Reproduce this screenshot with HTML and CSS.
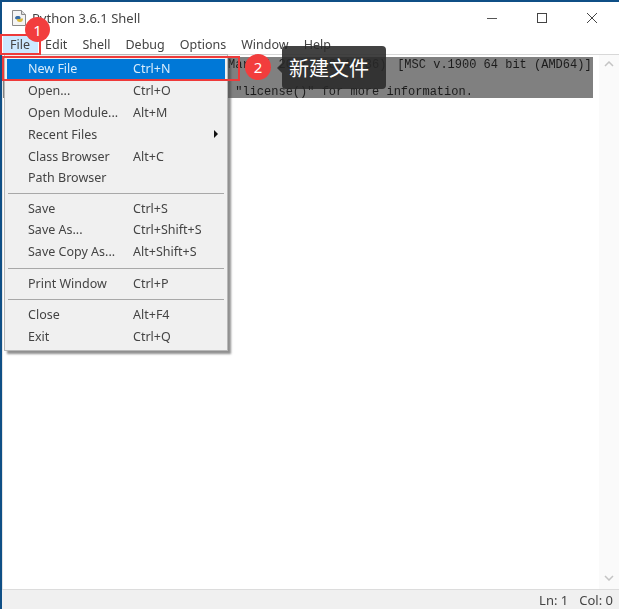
FILE: index.html
```html
<!DOCTYPE html>
<html lang="en">
<head>
  <meta charset="UTF-8">
  <title>Python 3.6.1 Shell</title>
  <link rel="stylesheet" href="styles.css">
</head>
<body>
  <div class="window">
    <div class="titlebar">
      <svg class="app-icon" width="18" height="18" viewBox="0 0 18 18">
        <path d="M2.5 1.5h9l4 4v11h-13z" fill="#f4f4f4" stroke="#8a8a8a"/>
        <path d="M11.5 1.5v4h4" fill="#ddd" stroke="#8a8a8a"/>
        <path d="M5 9.5c0-2 1.200-2.500 3-2.500s2.500.7 2.500 1.500v2H7.500v.5" fill="#3a6ea5"/>
        <path d="M13 9.500c0 2.500-1 3.500-3 3.500s-3-.7-3-2v-1h3.500v-.5z" fill="#d9b93a"/>
      </svg>
      <span class="title">Python 3.6.1 Shell</span>
      <div class="controls">
        <svg width="12" height="12" viewBox="0 0 12 12"><path d="M1 6.500h10" stroke="#555" fill="none"/></svg>
        <svg width="12" height="12" viewBox="0 0 12 12"><rect x="1.500" y="1.500" width="9" height="9" stroke="#444" fill="none"/></svg>
        <svg width="12" height="12" viewBox="0 0 12 12"><path d="M1 1l10 10M11 1L1 11" stroke="#444" fill="none"/></svg>
      </div>
    </div>

    <div class="menubar">
      <span class="menu-top active">File</span>
      <span class="menu-top">Edit</span>
      <span class="menu-top">Shell</span>
      <span class="menu-top">Debug</span>
      <span class="menu-top">Options</span>
      <span class="menu-top">Window</span>
      <span class="menu-top">Help</span>
    </div>

    <div class="shell">
      <div class="shell-text">
        <div class="selection">
          <div>Python 3.6.1 (v3.6.1:69c0db5, Mar 21 2017, 18:41:36) <span class="build">[MSC v.1900 64 bit (AMD64)]</span></div>
          <div>Type "copyright", "credits" or "license()" for more information.</div>
        </div>
      </div>
      <div class="scrollbar">
        <svg width="10" height="6" viewBox="0 0 10 6"><path d="M1 5l4-4 4 4" stroke="#c4c4c4" stroke-width="1.500" fill="none"/></svg>
        <svg width="10" height="6" viewBox="0 0 10 6"><path d="M1 1l4 4 4-4" stroke="#c4c4c4" stroke-width="1.500" fill="none"/></svg>
      </div>
    </div>

    <div class="statusbar">
      <span>Ln: 1</span>
      <span>Col: 0</span>
    </div>

    <div class="menu">
      <div class="item selected"><span class="label">New File</span><span>Ctrl+N</span></div>
      <div class="item"><span class="label">Open...</span><span>Ctrl+O</span></div>
      <div class="item"><span class="label">Open Module...</span><span>Alt+M</span></div>
      <div class="item"><span class="label">Recent Files</span><i class="arrow"></i></div>
      <div class="item"><span class="label">Class Browser</span><span>Alt+C</span></div>
      <div class="item"><span class="label">Path Browser</span></div>
      <div class="sep sep-first"></div>
      <div class="item"><span class="label">Save</span><span>Ctrl+S</span></div>
      <div class="item"><span class="label">Save As...</span><span>Ctrl+Shift+S</span></div>
      <div class="item"><span class="label">Save Copy As...</span><span>Alt+Shift+S</span></div>
      <div class="sep"></div>
      <div class="item"><span class="label">Print Window</span><span>Ctrl+P</span></div>
      <div class="sep"></div>
      <div class="item"><span class="label">Close</span><span>Alt+F4</span></div>
      <div class="item"><span class="label">Exit</span><span>Ctrl+Q</span></div>
    </div>
  </div>

  <!-- annotations on top of the screenshot -->
  <div class="mark mark-file"></div>
  <div class="mark mark-new"></div>
  <div class="badge badge-1">1</div>
  <div class="badge badge-2">2</div>
  <div class="tip">新建文件</div>
</body>
</html>
```

FILE: styles.css
```css
* {
  box-sizing: border-box;
  margin: 0;
  padding: 0;
}

html, body {
  height: 609px;
  overflow: hidden;
}

body {
  background: #0f4f86;
  font-family: "Noto Sans", "Open Sans", "Liberation Sans", sans-serif;
  position: relative;
}

/* the filter makes this the containing block of .menu */
.window {
  height: 607px;
  margin: 2px 0 0 2px;
  background: #fff;
  display: flex;
  flex-direction: column;
  color: #444;
  font-size: 12.500px;
  filter: blur(0.45px);
}

.titlebar {
  height: 32px;
  display: flex;
  align-items: center;
  padding-left: 8px;
  flex-shrink: 0;
}

.app-icon {
  margin-right: 4px;
}

.title {
  font-size: 13px;
  color: #444;
}

.controls {
  margin-left: auto;
  display: flex;
  gap: 38px;
  padding-right: 21px;
}

.menubar {
  height: 20px;
  display: flex;
  align-items: center;
  padding-left: 0.500px;
  flex-shrink: 0;
}

.menu-top {
  padding: 0 7.500px;
  line-height: 17px;
}

.menu-top.active {
  background: #cce8ff;
}

.shell {
  flex: 1;
  display: flex;
  border-top: 1px solid #d8d8d8;
  border-left: 1px solid #e4e4e4;
  min-height: 0;
}

.shell-text {
  flex: 1;
  min-width: 0;
  overflow: hidden;
  padding: 2px 6px 0 0;
}

.selection {
  background: #808080;
  color: #1c1c1c;
  padding: 1px 0 0 9px;
  height: 41px;
  white-space: pre;
  font-family: "Liberation Mono", monospace;
  font-size: 12px;
  display: flex;
  flex-direction: column;
  gap: 13px;
  line-height: 14px;
}

.build {
  margin-left: 3.500px;
}

.scrollbar {
  width: 20px;
  background: #fafafa;
  display: flex;
  flex-direction: column;
  justify-content: space-between;
  align-items: center;
  padding: 6px 0 8px;
}

.statusbar {
  height: 20px;
  flex-shrink: 0;
  background: #f0f0f0;
  border-top: 1px solid #dcdcdc;
  display: flex;
  justify-content: flex-end;
  align-items: center;
  gap: 11px;
  padding-right: 6px;
  font-size: 13px;
}

.menu {
  position: absolute;
  left: 2px;
  top: 52px;
  width: 224px;
  padding: 4px 2px 2px;
  background: #f0f0f0;
  border: 1px solid #b8b8b8;
  box-shadow: 3px 3px 2px rgba(70, 70, 70, 0.6);
}

.item {
  height: 21.800px;
  padding-bottom: 2px;
  display: flex;
  align-items: center;
  position: relative;
  color: #444;
}

.item.selected {
  background: #0078d7;
  color: #d8ecfb;
}

.label {
  width: 105px;
  margin-left: 21px;
  flex-shrink: 0;
}

.arrow {
  position: absolute;
  right: 7px;
  top: 6px;
  border-left: 4px solid #111;
  border-top: 4px solid transparent;
  border-bottom: 4px solid transparent;
}

.sep {
  height: 1px;
  background: #a8a8a8;
  margin: 4px 1px 4.500px;
}

.sep-first {
  margin-top: 3px;
}

.mark {
  position: absolute;
  border: 2px solid #ee3a3a;
}

.mark-file {
  left: 0;
  top: 34px;
  width: 41px;
  height: 21px;
}

.mark-new {
  left: 2px;
  top: 56px;
  width: 238px;
  height: 25px;
}

.badge {
  position: absolute;
  border-radius: 50%;
  background: #f23d3d;
  color: #fff;
  display: flex;
  align-items: center;
  justify-content: center;
  font-size: 15px;
}

.badge-1 {
  left: 25px;
  top: 17px;
  width: 25px;
  height: 25px;
}

.badge-2 {
  left: 245px;
  top: 54px;
  width: 26px;
  height: 26px;
}

.tip {
  position: absolute;
  left: 282px;
  top: 46px;
  width: 104px;
  height: 43px;
  padding-left: 7px;
  border-radius: 4px;
  background: rgba(40, 40, 40, 0.88);
  color: #fff;
  font-family: "Noto Sans CJK SC", sans-serif;
  font-size: 20px;
  display: flex;
  align-items: center;
}

.tip::before {
  content: "";
  position: absolute;
  left: -5px;
  top: 17px;
  border-right: 5px solid rgba(40, 40, 40, 0.88);
  border-top: 5px solid transparent;
  border-bottom: 5px solid transparent;
}
```
